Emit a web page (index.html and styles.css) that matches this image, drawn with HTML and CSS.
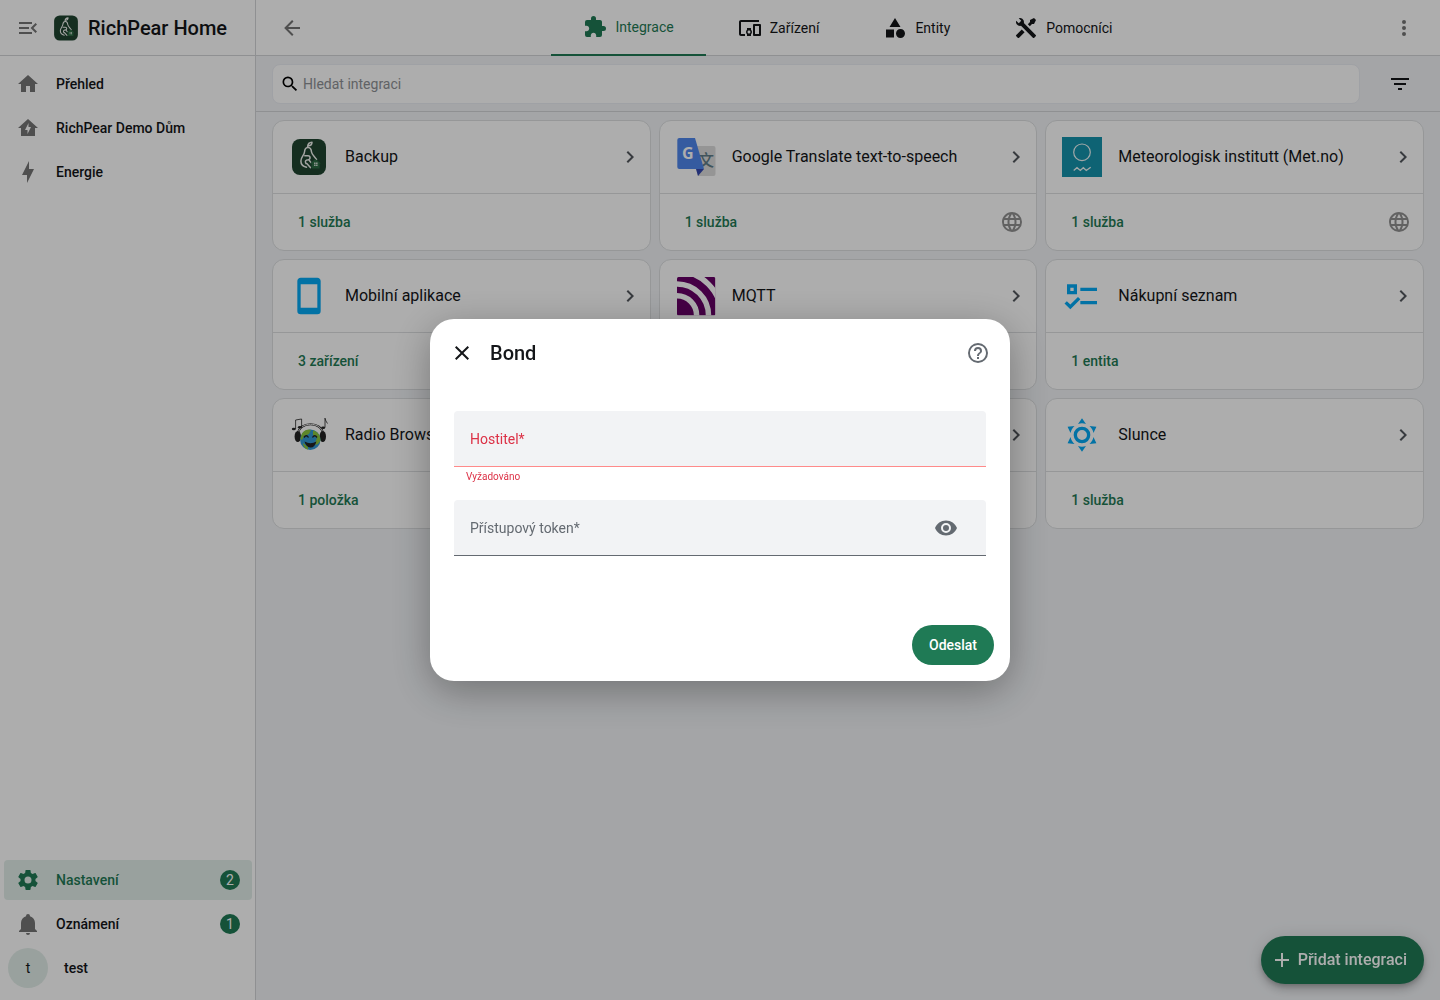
FILE: index.html
```html
<!DOCTYPE html>
<html lang="cs">
<head>
	<meta charset="utf-8" />
	<meta name="viewport" content="width=device-width,initial-scale=1" />
	<title>RichPear Home</title>
	<link rel="stylesheet" href="styles.css">
</head>
<body>
	<!-- shared icons -->
	<svg class="sprite" aria-hidden="true">
		<symbol id="chevron" viewBox="0 0 24 24"><path d="M8.59,16.58L13.17,12L8.59,7.41L10,6L16,12L10,18L8.59,16.58Z"/></symbol>
		<symbol id="web" viewBox="0 0 24 24"><path d="M16.36,14C16.44,13.34 16.5,12.68 16.5,12C16.5,11.32 16.44,10.66 16.36,10H19.74C19.9,10.64 20,11.31 20,12C20,12.69 19.9,13.36 19.74,14M14.59,19.56C15.19,18.45 15.65,17.25 15.97,16H18.92C17.96,17.65 16.43,18.93 14.59,19.56M14.34,14H9.66C9.56,13.34 9.5,12.68 9.5,12C9.5,11.32 9.56,10.65 9.66,10H14.34C14.43,10.65 14.5,11.32 14.5,12C14.5,12.68 14.43,13.34 14.34,14M12,19.96C11.17,18.76 10.5,17.43 10.09,16H13.91C13.5,17.43 12.83,18.76 12,19.96M8,8H5.08C6.03,6.34 7.57,5.06 9.4,4.44C8.8,5.55 8.35,6.75 8,8M5.08,16H8C8.35,17.25 8.8,18.45 9.4,19.56C7.57,18.93 6.03,17.65 5.08,16M4.26,14C4.1,13.36 4,12.69 4,12C4,11.31 4.1,10.64 4.26,10H7.64C7.56,10.66 7.5,11.32 7.5,12C7.5,12.68 7.56,13.34 7.64,14M12,4.03C12.83,5.23 13.5,6.57 13.91,8H10.09C10.5,6.57 11.17,5.23 12,4.03M18.92,8H15.97C15.65,6.75 15.19,5.55 14.59,4.44C16.43,5.07 17.96,6.34 18.92,8M12,2C6.47,2 2,6.5 2,12A10,10 0 0,0 12,22A10,10 0 0,0 22,12A10,10 0 0,0 12,2Z"/></symbol>
		<symbol id="pear" viewBox="0 0 40 40">
			<rect x="3" y="2" width="34" height="36" rx="8" fill="#1f4430"/>
			<g fill="none" stroke="#f2f4f0" stroke-width="1.5" stroke-linecap="round" stroke-linejoin="round">
				<path d="M18.6 9.6C18.8 7 20.5 5.4 23 5.3C23 7.6 21.4 8.8 19.2 8.8M18.6 10.6C16.4 10.8 15.7 12.6 15.5 15C15.2 18.4 11.9 19.8 11.9 24C11.9 27.4 14.5 29.6 17.5 30.2M19.4 10.6C21.6 10.8 22.3 12.6 22.5 15C22.8 17.6 26 20 27.5 22.5"/>
				<path d="M15.8 18.8H19C21.6 18.8 21.8 22.3 19.2 22.7C16.6 23 15.6 24.4 17 26.6M20 23L21.8 25.4M17.8 26.6L21.4 30.6"/>
			</g>
			<path d="M21 26.6L26.4 22L32 26.6H30.6V31.6H22.6V26.6Z" fill="#2c6a43"/>
			<path d="M25.2 25.6h1.3v1.3h-1.3zM27.2 25.6h1.3v1.3h-1.3zM25.2 27.6h1.3v1.3h-1.3zM27.2 27.6h1.3v1.3h-1.3z" fill="#f2f4f0"/>
		</symbol>
	</svg>

	<div class="app">
		<aside class="sidebar">
			<div class="brand">
				<button class="icon-btn" aria-label="Menu"><svg class="icon" viewBox="0 0 24 24"><path d="M21,15.61L19.59,17L14.58,12L19.59,7L21,8.39L17.44,12L21,15.61M3,6H16V8H3V6M3,13V11H13V13H3M3,18V16H16V18H3Z"/></svg></button>
				<svg class="brand-logo"><use href="#pear"/></svg>
				<span class="brand-name">RichPear Home</span>
			</div>
			<nav class="menu">
				<a class="item" href="#"><svg class="icon" viewBox="0 0 24 24"><path d="M10,20V14H14V20H19V12H22L12,3L2,12H5V20H10Z"/></svg><span>Přehled</span></a>
				<a class="item" href="#"><svg class="icon" viewBox="0 0 24 24"><path d="M12 3L2 12H5V20H19V12H22L12 3M11.5 18V14H9L12.5 7V11H15L11.5 18Z"/></svg><span>RichPear Demo Dům</span></a>
				<a class="item" href="#"><svg class="icon" viewBox="0 0 24 24"><path d="M11 15H6L13 1V9H18L11 23V15Z"/></svg><span>Energie</span></a>
			</nav>
			<nav class="menu menu-bottom">
				<a class="item active" href="#"><svg class="icon" viewBox="0 0 24 24"><path d="M12,15.5A3.5,3.5 0 0,1 8.5,12A3.5,3.5 0 0,1 12,8.5A3.5,3.5 0 0,1 15.5,12A3.5,3.5 0 0,1 12,15.5M19.43,12.97C19.47,12.65 19.5,12.33 19.5,12C19.5,11.67 19.47,11.34 19.43,11L21.54,9.37C21.73,9.22 21.78,8.95 21.66,8.73L19.66,5.27C19.54,5.05 19.27,4.96 19.05,5.05L16.56,6.05C16.04,5.66 15.5,5.32 14.87,5.07L14.5,2.42C14.46,2.18 14.25,2 14,2H10C9.75,2 9.54,2.18 9.5,2.42L9.13,5.07C8.5,5.32 7.96,5.66 7.44,6.05L4.95,5.05C4.73,4.96 4.46,5.05 4.34,5.27L2.34,8.73C2.21,8.95 2.27,9.22 2.46,9.37L4.57,11C4.53,11.34 4.5,11.67 4.5,12C4.5,12.33 4.53,12.65 4.57,12.97L2.46,14.63C2.27,14.78 2.21,15.05 2.34,15.27L4.34,18.73C4.46,18.95 4.73,19.03 4.95,18.95L7.44,17.94C7.96,18.34 8.5,18.68 9.13,18.93L9.5,21.58C9.54,21.82 9.75,22 10,22H14C14.25,22 14.46,21.82 14.5,21.58L14.87,18.93C15.5,18.67 16.04,18.34 16.56,17.94L19.05,18.95C19.27,19.03 19.54,18.95 19.66,18.73L21.66,15.27C21.78,15.05 21.73,14.78 21.54,14.63L19.43,12.97Z"/></svg><span>Nastavení</span><span class="badge">2</span></a>
				<a class="item" href="#"><svg class="icon" viewBox="0 0 24 24"><path d="M21,19V20H3V19L5,17V11C5,7.9 7.03,5.17 10,4.29C10,4.19 10,4.1 10,4A2,2 0 0,1 12,2A2,2 0 0,1 14,4C14,4.1 14,4.19 14,4.29C16.97,5.17 19,7.9 19,11V17L21,19M14,21A2,2 0 0,1 12,23A2,2 0 0,1 10,21"/></svg><span>Oznámení</span><span class="badge">1</span></a>
				<a class="item user" href="#"><span class="avatar">t</span><span>test</span></a>
			</nav>
		</aside>

		<main class="main">
			<header class="topbar">
				<button class="icon-btn" aria-label="Zpět"><svg class="icon" viewBox="0 0 24 24"><path d="M20,11V13H8L13.5,18.5L12.08,19.92L4.16,12L12.08,4.08L13.5,5.5L8,11H20Z"/></svg></button>
				<nav class="tabs">
					<a class="tab active" href="#"><svg class="icon" viewBox="0 0 24 24"><path d="M20.5,11H19V7C19,5.89 18.1,5 17,5H13V3.5A2.5,2.5 0 0,0 10.5,1A2.5,2.5 0 0,0 8,3.5V5H4A2,2 0 0,0 2,7V10.8H3.5C5,10.8 6.2,12 6.2,13.5C6.2,15 5,16.2 3.5,16.2H2V20A2,2 0 0,0 4,22H7.8V20.5C7.8,19 9,17.8 10.5,17.8C12,17.8 13.2,19 13.2,20.5V22H17A2,2 0 0,0 19,20V16H20.5A2.5,2.5 0 0,0 23,13.5A2.5,2.5 0 0,0 20.5,11Z"/></svg>Integrace</a>
					<a class="tab" href="#"><svg class="icon" viewBox="0 0 24 24"><path d="M3 6H21V4H3C1.9 4 1 4.9 1 6V18C1 19.1 1.9 20 3 20H7V18H3V6M13 12H9V13.78C8.39 14.33 8 15.11 8 16C8 16.89 8.39 17.67 9 18.22V20H13V18.22C13.61 17.67 14 16.88 14 16S13.61 14.33 13 13.78V12M11 17.5C10.17 17.5 9.5 16.83 9.5 16S10.17 14.5 11 14.5 12.5 15.17 12.5 16 11.83 17.5 11 17.5M22 8H16C15.5 8 15 8.5 15 9V19C15 19.5 15.5 20 16 20H22C22.5 20 23 19.5 23 19V9C23 8.5 22.5 8 22 8M21 18H17V10H21V18Z"/></svg>Zařízení</a>
					<a class="tab" href="#"><svg class="icon" viewBox="0 0 24 24"><path d="M11,13.5V21.5H3V13.5H11M12,2L17.5,11H6.5L12,2M17.5,13C20,13 22,15 22,17.5C22,20 20,22 17.5,22C15,22 13,20 13,17.5C13,15 15,13 17.5,13Z"/></svg>Entity</a>
					<a class="tab" href="#"><svg class="icon" viewBox="0 0 24 24"><path d="M21.71 20.29L20.29 21.71A1 1 0 0 1 18.88 21.71L7 9.85A3.81 3.81 0 0 1 6 10A4 4 0 0 1 2.22 4.7L4.76 7.24L5.29 6.71L6.71 5.29L7.24 4.76L4.7 2.22A4 4 0 0 1 10 6A3.81 3.81 0 0 1 9.85 7L21.71 18.88A1 1 0 0 1 21.71 20.29M2.29 18.88A1 1 0 0 0 2.29 20.29L3.71 21.71A1 1 0 0 0 5.12 21.71L10.59 16.25L7.76 13.42M20 2L16 4V6L13.83 8.17L15.83 10.17L18 8H20L22 4Z"/></svg>Pomocníci</a>
				</nav>
				<button class="icon-btn" aria-label="Další"><svg class="icon" viewBox="0 0 24 24"><path d="M12,16A2,2 0 0,1 14,18A2,2 0 0,1 12,20A2,2 0 0,1 10,18A2,2 0 0,1 12,16M12,10A2,2 0 0,1 14,12A2,2 0 0,1 12,14A2,2 0 0,1 10,12A2,2 0 0,1 12,10M12,4A2,2 0 0,1 14,6A2,2 0 0,1 12,8A2,2 0 0,1 10,6A2,2 0 0,1 12,4Z"/></svg></button>
			</header>

			<div class="searchbar">
				<div class="search">
					<svg class="search-icon" viewBox="0 0 24 24"><path d="M9.5,3A6.5,6.5 0 0,1 16,9.5C16,11.11 15.41,12.59 14.44,13.73L14.71,14H15.5L20.5,19L19,20.5L14,15.5V14.71L13.73,14.44C12.59,15.41 11.11,16 9.5,16A6.5,6.5 0 0,1 3,9.5A6.5,6.5 0 0,1 9.5,3M9.5,5C7,5 5,7 5,9.5C5,12 7,14 9.5,14C12,14 14,12 14,9.5C14,7 12,5 9.5,5Z"/></svg>
					<input type="search" placeholder="Hledat integraci" aria-label="Hledat integraci" />
				</div>
				<button class="icon-btn dark" aria-label="Filtr"><svg class="icon" viewBox="0 0 24 24"><path d="M6,13H18V11H6M3,6V8H21V6M10,18H14V16H10V18Z"/></svg></button>
			</div>

			<div class="cards">
				<div class="card">
					<a class="card-head" href="#">
						<svg class="card-logo"><use href="#pear"/></svg>
						<span class="card-title">Backup</span>
						<svg class="icon"><use href="#chevron"/></svg>
					</a>
					<div class="card-foot"><a href="#">1 služba</a></div>
				</div>
				<div class="card">
					<a class="card-head" href="#">
						<svg class="card-logo" viewBox="0 0 40 40">
							<path d="M14 9H37.5Q39.5 9 39.5 11V37Q39.5 39 37.5 39H22Z" fill="#dcdcdc"/>
							<text class="wen" x="22" y="29">文</text>
							<path d="M20 32H28L22 39Z" fill="#3448ae"/>
							<path d="M3.3 1H19L28 32H3.3Q1.3 32 1.3 30V3Q1.3 1 3.3 1Z" fill="#4f86ec"/>
							<text class="gee" x="6" y="22">G</text>
						</svg>
						<span class="card-title">Google Translate text-to-speech</span>
						<svg class="icon"><use href="#chevron"/></svg>
					</a>
					<div class="card-foot"><a href="#">1 služba</a><svg class="icon"><use href="#web"/></svg></div>
				</div>
				<div class="card">
					<a class="card-head" href="#">
						<svg class="card-logo" viewBox="0 0 40 40">
							<rect width="40" height="40" fill="#1693ab"/>
							<circle cx="20" cy="15.3" r="8.3" fill="none" stroke="#eef6f7" stroke-width="1.2"/>
							<path d="M11.7 33.5L15 30.7L18.3 33.5L21.3 30.7L24.3 33.5L28.7 30.2" fill="none" stroke="#eef6f7" stroke-width="1.3"/>
						</svg>
						<span class="card-title">Meteorologisk institutt (Met.no)</span>
						<svg class="icon"><use href="#chevron"/></svg>
					</a>
					<div class="card-foot"><a href="#">1 služba</a><svg class="icon"><use href="#web"/></svg></div>
				</div>
				<div class="card">
					<a class="card-head" href="#">
						<svg class="card-logo blue" viewBox="0 0 24 24"><path d="M17,19H7V5H17M17,1H7C5.89,1 5,1.89 5,3V21A2,2 0 0,0 7,23H17A2,2 0 0,0 19,21V3C19,1.89 18.1,1 17,1Z"/></svg>
						<span class="card-title">Mobilní aplikace</span>
						<svg class="icon"><use href="#chevron"/></svg>
					</a>
					<div class="card-foot"><a href="#">3 zařízení</a></div>
				</div>
				<div class="card">
					<a class="card-head" href="#">
						<svg class="card-logo" viewBox="0 0 40 40">
							<clipPath id="mq"><rect x="1" y="1" width="38.4" height="38.4" rx="1.5"/></clipPath>
							<g clip-path="url(#mq)">
								<rect x="1" y="1" width="38.4" height="38.4" fill="#660066"/>
								<circle cx="1" cy="39.4" r="44.3" fill="none" stroke="#fff" stroke-width="5.5"/>
								<circle cx="1" cy="39.4" r="31.5" fill="none" stroke="#fff" stroke-width="5.5"/>
								<circle cx="1" cy="39.4" r="19.6" fill="none" stroke="#fff" stroke-width="5.5"/>
							</g>
						</svg>
						<span class="card-title">MQTT</span>
						<svg class="icon"><use href="#chevron"/></svg>
					</a>
					<div class="card-foot"></div>
				</div>
				<div class="card">
					<a class="card-head" href="#">
						<svg class="card-logo blue" viewBox="0 0 24 24"><path d="M3,5H9V11H3V5M5,7V9H7V7H5M11,7H21V9H11V7M11,15H21V17H11V15M5,20L1.5,16.5L2.91,15.09L5,17.17L9.59,12.59L11,14L5,20Z"/></svg>
						<span class="card-title">Nákupní seznam</span>
						<svg class="icon"><use href="#chevron"/></svg>
					</a>
					<div class="card-foot"><a href="#">1 entita</a></div>
				</div>
				<div class="card">
					<a class="card-head" href="#">
						<svg class="card-logo" viewBox="0 0 40 40">
							<path d="M9 19C10 6 33 6 34 19" fill="none" stroke="#222" stroke-width="2.2"/>
							<path d="M9 19C10 6 33 6 34 19" fill="none" stroke="#eee" stroke-width="1"/>
							<ellipse cx="8.8" cy="21.5" rx="3.2" ry="5.5" fill="#222"/>
							<ellipse cx="33.8" cy="21.5" rx="3.2" ry="5.5" fill="#222"/>
							<circle cx="21.3" cy="24.8" r="10.2" fill="#3298d4"/>
							<path d="M13 18.5C16 14 21 14 22 15L20 19L15 21L13 25L11.3 24ZM24 15.5C29 16.5 32 21 31.3 26C29 30 26 31 26 28L28 23L24 20ZM14 28L19 32V34.5C16 34 14 31 14 28Z" fill="#8bc63e"/>
							<path d="M15 22.5Q17.3 19 19.5 22.5M23.5 22.5Q25.7 19 28 22.5" fill="none" stroke="#222" stroke-width="1.4"/>
							<path d="M15.5 26.5Q21.5 30 27.5 26.5Q25.5 33 21.3 32.5Q17 32 15.5 26.5Z" fill="#222"/>
							<path d="M6.6 14V5L12.6 4V12M36 3V12.5M36 3.3Q36.5 6 38.5 8.5" fill="none" stroke="#222" stroke-width="0.8"/>
							<ellipse cx="4.8" cy="14" rx="2" ry="1.3" fill="#222"/><ellipse cx="10.9" cy="12.2" rx="2" ry="1.3" fill="#222"/><ellipse cx="34.2" cy="12.7" rx="2" ry="1.3" fill="#222"/>
						</svg>
						<span class="card-title">Radio Browser</span>
						<svg class="icon"><use href="#chevron"/></svg>
					</a>
					<div class="card-foot"><a href="#">1 položka</a></div>
				</div>
				<div class="card">
					<a class="card-head" href="#">
						<span class="card-title"></span>
						<svg class="icon"><use href="#chevron"/></svg>
					</a>
					<div class="card-foot"></div>
				</div>
				<div class="card">
					<a class="card-head" href="#">
						<svg class="card-logo blue" viewBox="0 0 24 24"><path d="M12,7A5,5 0 0,1 17,12A5,5 0 0,1 12,17A5,5 0 0,1 7,12A5,5 0 0,1 12,7M12,9A3,3 0 0,0 9,12A3,3 0 0,0 12,15A3,3 0 0,0 15,12A3,3 0 0,0 12,9M12,2L14.39,5.42C13.65,5.15 12.84,5 12,5C11.16,5 10.35,5.15 9.61,5.42L12,2M3.34,7L7.5,6.65C6.9,7.16 6.36,7.78 5.94,8.5C5.5,9.24 5.25,10 5.11,10.79L3.34,7M3.36,17L5.12,13.23C5.26,14 5.53,14.78 5.95,15.5C6.37,16.24 6.91,16.86 7.5,17.37L3.36,17M20.65,7L18.88,10.79C18.74,10 18.47,9.23 18.05,8.5C17.63,7.78 17.1,7.15 16.5,6.64L20.65,7M20.64,17L16.5,17.36C17.09,16.85 17.62,16.22 18.04,15.5C18.46,14.77 18.73,14 18.87,13.21L20.64,17M12,22L9.59,18.56C10.33,18.83 11.14,19 12,19C12.82,19 13.63,18.83 14.37,18.56L12,22Z"/></svg>
						<span class="card-title">Slunce</span>
						<svg class="icon"><use href="#chevron"/></svg>
					</a>
					<div class="card-foot"><a href="#">1 služba</a></div>
				</div>
			</div>
			<button class="fab"><svg class="icon" viewBox="0 0 24 24"><path d="M19,13H13V19H11V13H5V11H11V5H13V11H19V13Z"/></svg>Přidat integraci</button>
		</main>
	</div>

	<div class="backdrop">
		<form class="dialog" role="dialog" aria-labelledby="dialogTitle">
			<div class="dialog-head">
				<button type="button" class="icon-btn dark" aria-label="Zavřít"><svg class="icon" viewBox="0 0 24 24"><path d="M19,6.41L17.59,5L12,10.59L6.41,5L5,6.41L10.59,12L5,17.59L6.41,19L12,13.41L17.59,19L19,17.59L13.41,12L19,6.41Z"/></svg></button>
				<h2 id="dialogTitle">Bond</h2>
				<button type="button" class="icon-btn" aria-label="Nápověda"><svg class="icon" viewBox="0 0 24 24"><path d="M11,18H13V16H11V18M12,2A10,10 0 0,0 2,12A10,10 0 0,0 12,22A10,10 0 0,0 22,12A10,10 0 0,0 12,2M12,20C7.59,20 4,16.41 4,12C4,7.59 7.59,4 12,4C16.41,4 20,7.59 20,12C20,16.41 16.41,20 12,20M12,6A4,4 0 0,0 8,10H10A2,2 0 0,1 12,8A2,2 0 0,1 14,10C14,12 11,11.75 11,15H13C13,12.75 16,12.5 16,10A4,4 0 0,0 12,6Z"/></svg></button>
			</div>
			<div class="dialog-body">
				<div class="field invalid">
					<label for="host">Hostitel*</label>
					<input id="host" type="text" aria-describedby="hostError" />
				</div>
				<div class="helper" id="hostError">Vyžadováno</div>
				<div class="field">
					<label for="token">Přístupový token*</label>
					<input id="token" type="password" />
					<button type="button" class="icon-btn" aria-label="Zobrazit"><svg class="icon" viewBox="0 0 24 24"><path d="M12,9A3,3 0 0,0 9,12A3,3 0 0,0 12,15A3,3 0 0,0 15,12A3,3 0 0,0 12,9M12,17A5,5 0 0,1 7,12A5,5 0 0,1 12,7A5,5 0 0,1 17,12A5,5 0 0,1 12,17M12,4.5C7,4.5 2.73,7.61 1,12C2.73,16.39 7,19.5 12,19.5C17,19.5 21.27,16.39 23,12C21.27,7.61 17,4.5 12,4.5Z"/></svg></button>
				</div>
			</div>
			<div class="dialog-foot">
				<button type="submit" class="submit">Odeslat</button>
			</div>
		</form>
	</div>
</body>
</html>
```
FILE: styles.css
```css
*{
	box-sizing: border-box;
}
body{
	margin: 0;
	font-family: Roboto, "Liberation Sans", sans-serif;
	font-size: 14px;
	line-height: 20px;
	color: #141619;
	background: #f2f4f7;
}
a{
	color: inherit;
	text-decoration: none;
}
button, input{
	font: inherit;
	color: inherit;
	border: 0;
	background: none;
	padding: 0;
	outline: none;
}
button{
	cursor: pointer;
}
.sprite{
	display: none;
}
.icon{
	width: 24px;
	height: 24px;
	fill: currentColor;
	flex: none;
}
.icon-btn{
	width: 48px;
	height: 48px;
	display: flex;
	align-items: center;
	justify-content: center;
	flex: none;
	color: #646a71;
}
.icon-btn.dark{
	color: #141619;
}
.app{
	display: flex;
	min-height: 100vh;
}

/* sidebar */
.sidebar{
	width: 256px;
	flex: none;
	display: flex;
	flex-direction: column;
	background: #fff;
	border-right: 1px solid #d3d5d8;
	padding-bottom: 8px;
}
.sidebar .icon, .topbar .icon-btn{
	color: #757575;
}
.brand{
	height: 56px;
	display: flex;
	align-items: center;
	padding-left: 4px;
	border-bottom: 1px solid #d3d5d8;
}
.brand-logo{
	width: 28px;
	height: 28px;
	margin-right: 8px;
}
.brand-name{
	font-size: 20px;
	font-weight: 500;
}
.menu{
	display: flex;
	flex-direction: column;
	gap: 4px;
	padding: 8px 3px 4px 4px;
}
.menu-bottom{
	margin-top: auto;
}
.item{
	height: 40px;
	display: flex;
	align-items: center;
	gap: 16px;
	padding: 0 12px;
	border-radius: 4px;
	font-weight: 500;
}
.item.active{
	color: #1f7a55;
	background: #e2eee9;
}
.item.active .icon{
	color: #1f7a55;
}
.item.user{
	padding-left: 4px;
}
.badge{
	width: 20px;
	height: 20px;
	margin-left: auto;
	border-radius: 50%;
	background: #1f7a55;
	color: #fff;
	font-weight: 400;
	text-align: center;
}
.avatar{
	width: 40px;
	height: 40px;
	line-height: 40px;
	border-radius: 50%;
	background: #e2eee9;
	font-weight: 400;
	text-align: center;
}

/* top bar */
.main{
	flex: 1;
	min-width: 0;
}
.topbar{
	height: 56px;
	display: flex;
	align-items: center;
	padding: 0 12px;
	background: #fff;
	border-bottom: 1px solid #d3d5d8;
}
.tabs{
	flex: 1;
	display: flex;
	justify-content: center;
}
.tab{
	height: 56px;
	display: flex;
	align-items: center;
	gap: 8px;
	padding: 0 32px;
}
.tab.active{
	color: #1f7a55;
	border-bottom: 2px solid #1f7a55;
}
.searchbar{
	height: 56px;
	display: flex;
	align-items: center;
	gap: 16px;
	padding: 0 16px;
	border-bottom: 1px solid #d3d5d8;
}
.search{
	flex: 1;
	height: 40px;
	display: flex;
	align-items: center;
	gap: 3px;
	padding: 0 7px;
	background: #fff;
	border: 1px solid #ebedf3;
	border-radius: 8px;
}
.search input{
	flex: 1;
}
.search input::placeholder{
	color: #8e9196;
	opacity: 1;
}
.search-icon{
	width: 20px;
	height: 20px;
}

/* cards */
.cards{
	display: grid;
	grid-template-columns: repeat(3, minmax(0, 1fr));
	gap: 8px;
	padding: 8px 16px;
}
.card{
	background: #fff;
	border: 1px solid #dddfe1;
	border-radius: 12px;
}
.card-head{
	height: 72px;
	display: flex;
	align-items: center;
	gap: 16px;
	padding: 0 8px 0 16px;
	font-size: 16px;
}
.card-head .icon{
	color: #53575d;
}
.card-logo{
	width: 40px;
	height: 40px;
	flex: none;
}
.card-logo.blue{
	fill: #03a9f4;
}
.card-title{
	flex: 1;
}
.card-foot{
	height: 57px;
	display: flex;
	align-items: center;
	justify-content: space-between;
	padding: 0 12px 0 25px;
	border-top: 1px solid #dddfe1;
	color: #1f7a55;
	font-weight: 500;
}
.card-foot .icon{
	color: #919191;
}
.gee{
	font: 700 16px "Open Sans", sans-serif;
	fill: #fff;
}
.wen{
	font: 500 16px "Noto Sans CJK SC", sans-serif;
	fill: #607d88;
}
.fab{
	position: fixed;
	right: 16px;
	bottom: 16px;
	height: 48px;
	display: flex;
	align-items: center;
	gap: 4px;
	padding: 0 17px 0 9px;
	border-radius: 24px;
	background: #1f7a55;
	color: #fff;
	font-size: 16px;
	font-weight: 500;
	box-shadow: 0 3px 5px -1px rgba(0,0,0,.2), 0 6px 10px rgba(0,0,0,.14), 0 1px 18px rgba(0,0,0,.12);
}

/* dialog */
.backdrop{
	position: fixed;
	inset: 0;
	display: flex;
	align-items: center;
	justify-content: center;
	background: rgba(0,0,0,.32);
}
.dialog{
	width: 580px;
	background: #fff;
	border-radius: 24px;
	box-shadow: 0 10px 40px rgba(0,0,0,.32);
}
.dialog-head{
	display: flex;
	align-items: center;
	padding: 10px 8px;
}
.dialog-head h2{
	flex: 1;
	margin: 0 4px;
	font-size: 20px;
	font-weight: 500;
}
.dialog-body{
	padding: 24px 24px 53px;
}
.field{
	height: 56px;
	display: flex;
	align-items: center;
	gap: 8px;
	padding: 0 16px;
	background: #f2f3f5;
	border-bottom: 1px solid #646a71;
	border-radius: 4px 4px 0 0;
	color: #646a71;
}
.field input{
	flex: 1;
	min-width: 0;
}
.field.invalid{
	color: #dc3146;
	border-bottom-color: #ff8a8a;
}
.helper{
	height: 33px;
	padding-left: 12px;
	font-size: 10px;
	color: #dc3146;
}
.dialog-foot{
	display: flex;
	justify-content: flex-end;
	padding: 16px;
}
.submit{
	height: 40px;
	padding: 0 17px;
	border-radius: 20px;
	background: #1f7a55;
	color: #fff;
	font-weight: 500;
}
```
